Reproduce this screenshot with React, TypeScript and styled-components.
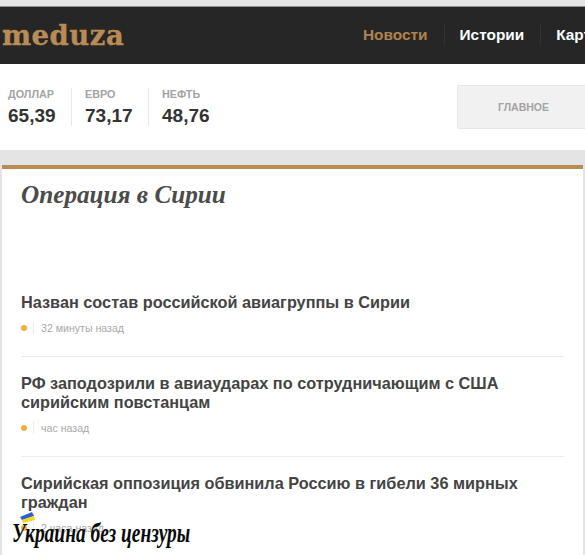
import React from "react";
import styled, { createGlobalStyle } from "styled-components";

const Global = createGlobalStyle`
  html, body { margin: 0; padding: 0; background: #e4e4e4; overflow: hidden; }
  body { font-family: "Liberation Sans", Arial, sans-serif; }
  #root { height: 555px; overflow: hidden; }
`;

const Page = styled.div`
  position: relative;
  width: 585px;
  height: 555px;
  overflow: hidden;
  background: #e4e4e4;
`;

const Header = styled.header`
  margin-top: 6px;
  height: 57px;
  border-top: 1px solid #8e8e8e;
  background: #262626;
  display: flex;
  align-items: center;
  overflow: hidden;
`;

const Logo = styled.div`
  width: 363px;
  flex: none;
  box-sizing: border-box;
  padding-left: 2px;
  font-family: "DejaVu Serif", serif;
  font-weight: 700;
  font-size: 27.5px;
  letter-spacing: 0.5px;
  -webkit-text-stroke: 0.4px #b98c55;
  color: #b98c55;
  line-height: 1;
`;

const Nav = styled.nav`
  display: flex;
  align-items: center;
  flex: none;
  margin-bottom: 2px;
`;

const NavItem = styled.a<{ $active?: boolean }>`
  font-size: 15.4px;
  font-weight: 700;
  white-space: nowrap;
  color: ${(p) => (p.$active ? "#b0834e" : "#ffffff")};
  padding-right: 16px;
  margin-right: 15px;
  height: 20px;
  line-height: 20px;
  border-right: 1px solid #333333;
  &:last-child { border: 0; margin: 0; padding: 0; }
`;

const Strip = styled.section`
  height: 86px;
  background: #fff;
  display: flex;
  justify-content: space-between;
  align-items: flex-start;
  padding: 21px 0 0 8px;
  box-sizing: border-box;
  overflow: hidden;
`;

const Rates = styled.div`
  display: flex;
  margin-top: 3px;
`;

const Rate = styled.div`
  width: 63px;
  height: 38px;
  margin-right: 13px;
  border-right: 1px solid #e8e8e8;
  &:last-child { border: 0; }
`;

const RateLabel = styled.div`
  font-size: 10.8px;
  font-weight: 700;
  line-height: 12px;
  color: #a3a3a3;
`;

const RateValue = styled.div`
  font-size: 19px;
  font-weight: 700;
  line-height: 22px;
  margin-top: 5px;
  color: #333;
`;

const TabButton = styled.div`
  width: 128px;
  flex: none;
  height: 44px;
  box-sizing: border-box;
  border: 1px solid #e8e8e8;
  border-right: 0;
  border-radius: 2px 0 0 2px;
  background: #f1f1f1;
  color: #a3a3a3;
  font-size: 10.5px;
  font-weight: 700;
  display: flex;
  align-items: center;
  padding-left: 40px;
`;

const Card = styled.main`
  margin: 15px 2px 0;
  border-top: 4px solid #b98c55;
  background: #fff;
  padding: 0 19px;
  height: 400px;
`;

const Title = styled.h1`
  margin: 0;
  padding-top: 13px;
  font-family: "Liberation Serif", serif;
  font-style: italic;
  font-weight: 700;
  font-size: 25.2px;
  line-height: 25px;
  color: #4b4b4b;
`;

const List = styled.div`
  margin-top: 86px;
`;

const Item = styled.article`
  padding-bottom: 22px;
  margin-bottom: 17px;
  border-bottom: 1px solid #ececec;
  &:last-child { border: 0; }
`;

const ItemTitle = styled.h2`
  margin: 0;
  font-size: 16.3px;
  font-weight: 700;
  line-height: 19px;
  color: #444;
`;

const Meta = styled.div`
  display: flex;
  align-items: center;
  margin-top: 9px;
  height: 13px;
  font-size: 10.6px;
  color: #a8a8a8;
`;

const Dot = styled.span`
  width: 6px;
  height: 6px;
  border-radius: 50%;
  background: #f3ad3e;
  margin-right: 6px;
`;

const MetaRule = styled.span`
  width: 1px;
  height: 13px;
  background: #ececec;
  margin-right: 7px;
`;

const Watermark = styled.div`
  position: absolute;
  left: 12px;
  top: 511px;
  width: 180px;
  height: 44px;
`;

const WatermarkText = styled.div`
  font-family: "Liberation Serif", serif;
  font-style: italic;
  font-weight: 700;
  font-size: 27px;
  line-height: 32px;
  color: #0a0a0a;
  white-space: nowrap;
  transform-origin: 0 0;
  transform: scaleX(0.72);
  margin-top: 6px;
`;

const Flag = styled.svg`
  position: absolute;
  left: 8px;
  top: 1px;
`;

const news = [
  { title: <>Назван состав российской авиагруппы в Сирии</>, time: "32 минуты назад" },
  { title: <>РФ заподозрили в авиаударах по сотрудничающим с США<br />сирийским повстанцам</>, time: "час назад" },
  { title: <>Сирийская оппозиция обвинила Россию в гибели 36 мирных<br />граждан</>, time: "2 часа назад" },
];

const rates = [
  ["ДОЛЛАР", "65,39"],
  ["ЕВРО", "73,17"],
  ["НЕФТЬ", "48,76"],
];

export default function App() {
  return (
    <Page>
      <Global />
      <Header>
        <Logo>meduza</Logo>
        <Nav>
          <NavItem $active>Новости</NavItem>
          <NavItem>Истории</NavItem>
          <NavItem>Карточки</NavItem>
        </Nav>
      </Header>
      <Strip>
        <Rates>
          {rates.map(([label, value]) => (
            <Rate key={label}>
              <RateLabel>{label}</RateLabel>
              <RateValue>{value}</RateValue>
            </Rate>
          ))}
        </Rates>
        <TabButton>ГЛАВНОЕ</TabButton>
      </Strip>
      <Card>
        <Title>Операция в Сирии</Title>
        <List>
          {news.map((n) => (
            <Item key={n.time}>
              <ItemTitle>{n.title}</ItemTitle>
              <Meta>
                <Dot />
                <MetaRule />
                {n.time}
              </Meta>
            </Item>
          ))}
        </List>
      </Card>
      <Watermark>
        <Flag width="15" height="11" viewBox="0 0 15 11">
          <path d="M0 5 L12 0 L14 4 L2 8 Z" fill="#2f62c8" />
          <path d="M2 8 L14 4 L15 8 L3 11 Z" fill="#f4d91e" />
        </Flag>
        <WatermarkText>Украина без цензуры</WatermarkText>
      </Watermark>
    </Page>
  );
}
